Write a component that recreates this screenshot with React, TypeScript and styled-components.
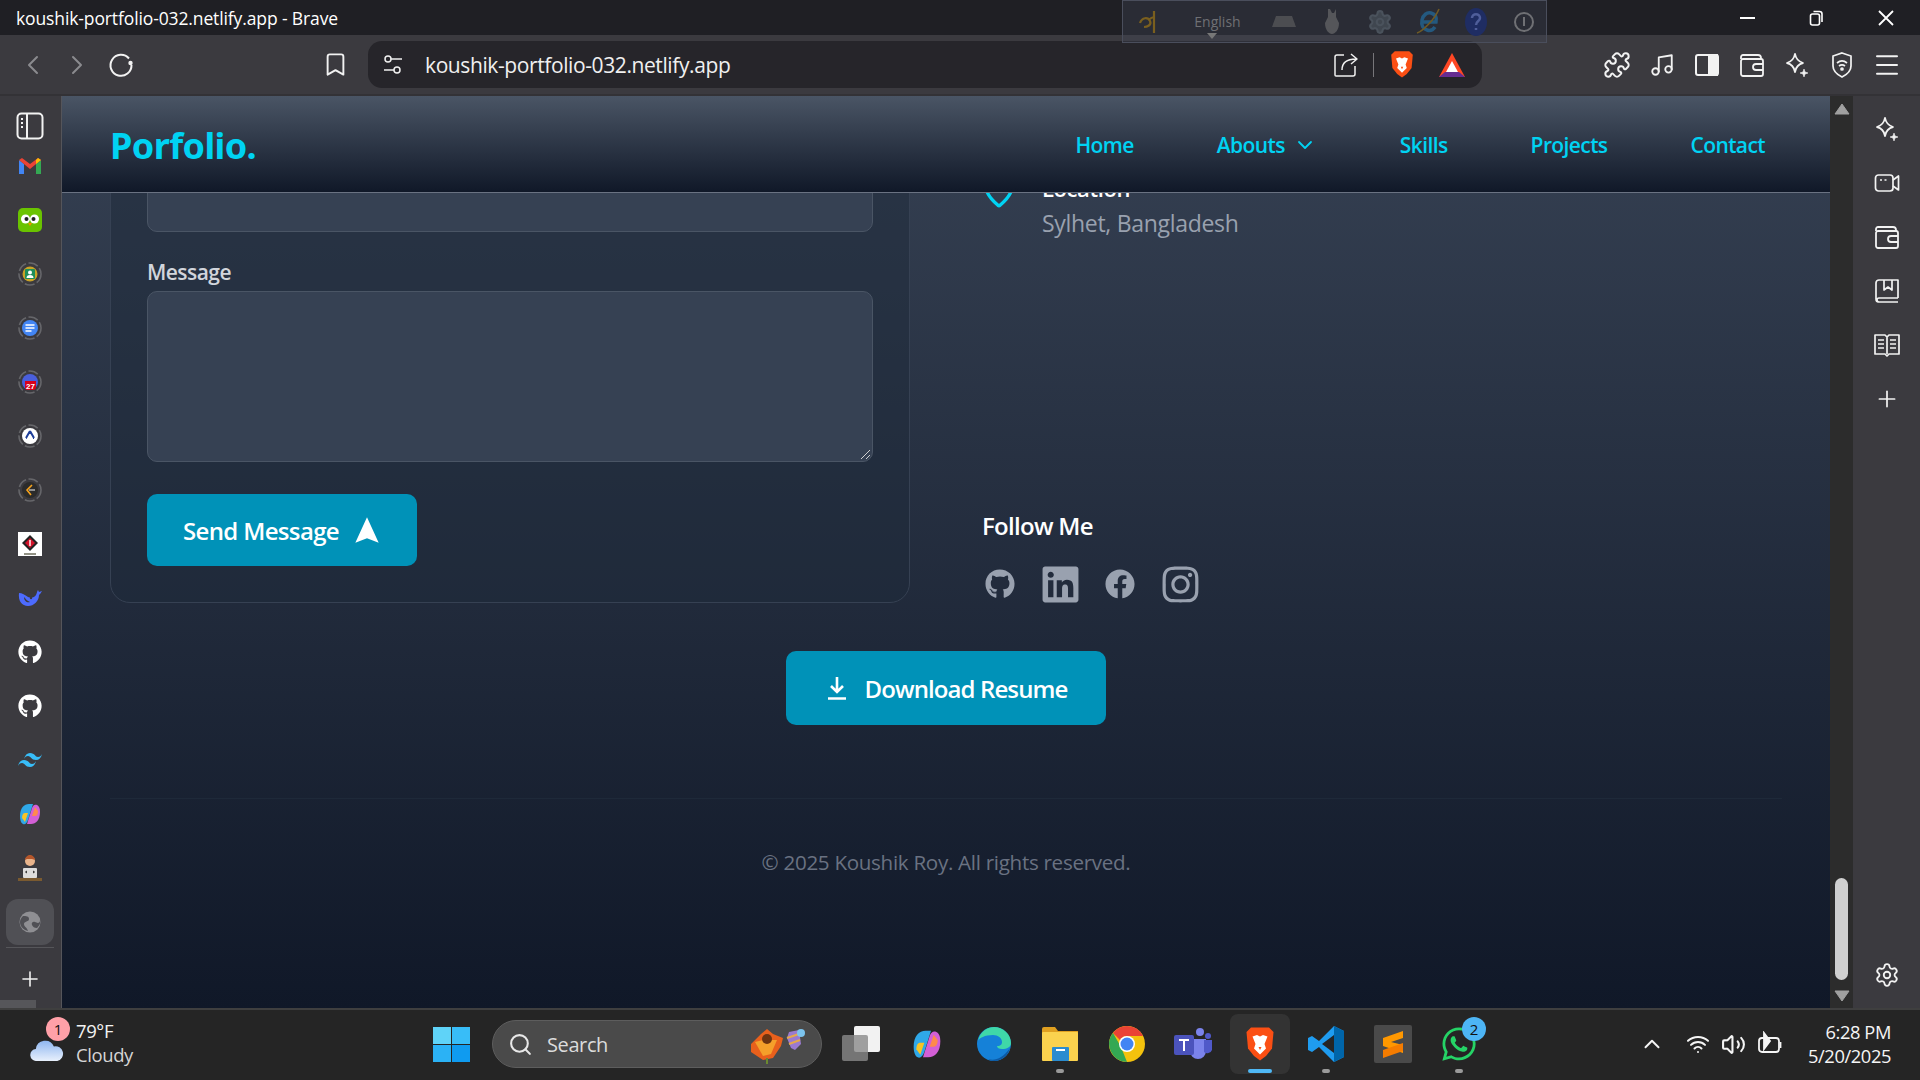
import React from "react";
import styled, { createGlobalStyle } from "styled-components";
import {
  ChevronLeft, ChevronRight, Bookmark, Puzzle, Music, Menu, Plus,
  Settings, ChevronDown, MapPin, Search, ChevronUp, Wifi, Volume2,
} from "lucide-react";
import { FaGithub, FaLinkedin, FaFacebook, FaInstagram, FaWhatsapp } from "react-icons/fa";

const Global = createGlobalStyle`
  html, body { margin: 0; padding: 0; height: 100%; overflow: hidden; background: #252525; }
  * { box-sizing: border-box; }
  body { font-family: "Open Sans", "Noto Sans", "Liberation Sans", sans-serif; }
`;

const Screen = styled.div`
  width: 1920px; height: 1080px; display: flex; flex-direction: column; position: relative; overflow: hidden;
`;
const TitleBar = styled.div`
  height: 35px; background: #1f1f24; display: flex; align-items: center; justify-content: space-between;
  padding-left: 16px; color: #fff; font-size: 17.5px; letter-spacing: -0.12px; flex: none;
`;
const WindowButtons = styled.div`
  display: flex; align-items: center; height: 100%; padding-right: 24px; gap: 49px; color: #fff;
`;
const Toolbar = styled.div`
  height: 61px; background: #3b3a3f; display: flex; align-items: center; flex: none; padding-left: 11px; border-bottom: 2px solid #333236;
`;
const ToolButton = styled.span<{ $w?: number; $dim?: boolean; $gap?: number }>`
  width: ${(p) => p.$w ?? 44}px; margin-left: ${(p) => p.$gap ?? 0}px; display: flex; justify-content: center; align-items: center; flex: none;
  color: ${(p) => (p.$dim ? "#8b8b8f" : "#f2f2f2")};
`;
const UrlBar = styled.div`
  width: 1114px; height: 47px; margin-left: 11px; margin-right: 120px; background: #26252a; border-radius: 14px; display: flex; align-items: center;
  padding: 0 14px 0 15px; color: #f0f0f0; font-size: 21px; letter-spacing: -0.4px; flex: none;
`;
const UrlText = styled.span`
  margin-left: 22px; flex: 1;
`;
const Divider = styled.span`
  width: 1px; height: 24px; background: #77767a; margin: 0 16px 0 12px;
`;
const ToolRow = styled.div`
  display: flex; align-items: center; gap: 15px;
`;
const Main = styled.div`
  flex: 1; display: flex; min-height: 0;
`;
const LeftSide = styled.aside`
  width: 62px; background: #3b3a3f; border-right: 1px solid #55555a; flex: none; display: flex; flex-direction: column; align-items: center; position: relative; padding-right: 1px;
`;
const SideTop = styled.div`
  padding-top: 16px; display: flex; flex-direction: column; align-items: center; gap: 17px; height: 112px;
`;
const SideIcons = styled.div`
  display: flex; flex-direction: column; gap: 30px; align-items: center;
`;
const SideSlot = styled.div`
  height: 24px; width: 24px; display: flex; align-items: center; justify-content: center;
  svg { flex: none; }
`;
const SideItem = styled.div`
  width: 48px; height: 46px; border-radius: 12px; background: #505055; display: flex; align-items: center; justify-content: center; margin-top: 19px;
`;
const SideRule = styled.div`
  width: 48px; height: 1px; background: #56565a; margin-top: 2px; margin-bottom: 19px;
`;
const SideFoot = styled.div`
  position: absolute; left: 0; bottom: 0; width: 36px; height: 8px; background: #56565a;
`;
const Viewport = styled.div`
  flex: 1; min-width: 0; display: flex; flex-direction: column; background: linear-gradient(to bottom, #364153, #101828);
`;
const Nav = styled.nav`
  height: 97px; flex: none; background: linear-gradient(to bottom, #4a5565, #101828); border-bottom: 1px solid #6a7282;
  display: flex; align-items: center; justify-content: space-between; padding: 0 65px 0 48px; position: relative; z-index: 2;
`;
const Logo = styled.div`
  color: #00d3f3; font-size: 36px; font-weight: 700; letter-spacing: -0.6px; font-family: "Noto Sans", sans-serif; padding-top: 2px;
`;
const NavLinks = styled.div`
  display: flex; align-items: center; gap: 83px; color: #00d3f3; font-size: 21px; font-weight: 600; letter-spacing: -0.6px; padding-top: 1px;
`;
const NavLink = styled.a`
  display: flex; align-items: center; gap: 8px;
`;
const PageClip = styled.div`
  flex: 1; min-height: 0; overflow: hidden; display: flex; flex-direction: column; justify-content: flex-end; padding: 0 48px;
`;
const Columns = styled.div`
  display: grid; grid-template-columns: 800px 1fr; gap: 72px; flex: none;
`;
const Card = styled.section`
  background: rgba(30, 41, 57, 0.5); border: 1px solid #364153; border-radius: 20px; padding: 36px; display: flex; flex-direction: column;
`;
const Label = styled.label`
  color: #d1d5dc; font-size: 21px; font-weight: 600; letter-spacing: -0.55px; line-height: 28px; margin-bottom: 5px;
`;
const Field = styled.div`
  height: 62px; background: #364153; border: 1px solid #4a5565; border-radius: 10px; margin-bottom: 26px;
`;
const TextArea = styled.div`
  height: 171px; background: #364153; border: 1px solid #4a5565; border-radius: 10px; margin-bottom: 32px; position: relative;
`;
const Grip = styled.svg`
  position: absolute; right: 1px; bottom: 1px;
`;
const CyanButton = styled.button`
  border: 0; background: #0092b8; color: #fff; border-radius: 10px; font: 600 24px "Open Sans", sans-serif; letter-spacing: -0.65px;
  display: flex; align-items: center; justify-content: center; gap: 14px;
`;
const SendButton = styled(CyanButton)`
  width: 270px; height: 72px;
`;
const InfoColumn = styled.div`
  display: flex; flex-direction: column; justify-content: space-between;
`;
const InfoRow = styled.div`
  display: flex; gap: 26px; align-items: flex-start; margin-top: 40px;
`;
const InfoIcon = styled.span`
  color: #00d3f3; width: 34px; display: flex; justify-content: center; margin-top: -4px;
  svg { flex: none; }
`;
const InfoTitle = styled.div`
  color: #fff; font-size: 22px; font-weight: 600; line-height: 30px; letter-spacing: -0.4px;
`;
const InfoText = styled.div`
  color: #99a1af; font-size: 23px; line-height: 36px; letter-spacing: -0.3px; margin-top: 2px;
`;
const FollowTitle = styled.h3`
  color: #fff; font-size: 24px; font-weight: 600; letter-spacing: -0.7px; margin: 0 0 24px; line-height: 30px;
`;
const Socials = styled.div`
  display: flex; gap: 24px; color: #99a1af; height: 38px; align-items: center;
`;
const SocialSlot = styled.a`
  width: 36px; height: 36px; display: flex; align-items: center; justify-content: center;
  svg { flex: none; }
`;
const Center = styled.div`
  display: flex; justify-content: center; margin-top: 48px; margin-bottom: 73px; flex: none;
`;
const ResumeButton = styled(CyanButton)`
  width: 320px; height: 74px; letter-spacing: -0.9px; gap: 16px;
`;
const Footer = styled.footer`
  flex: none; border-top: 1px solid #1e2939; height: 210px; padding-top: 47px; color: #6a7282; font-size: 20.6px; text-align: center; letter-spacing: -0.3px; line-height: 32px;
`;
const Scrollbar = styled.div`
  width: 23px; background: #2c2c2c; flex: none; display: flex; flex-direction: column; align-items: center; justify-content: space-between; padding: 7px 0 6px;
`;
const ThumbTrack = styled.div`
  flex: 1; display: flex; flex-direction: column; justify-content: flex-end; padding-bottom: 10px;
`;
const Thumb = styled.div`
  width: 13px; height: 102px; background: #d0d0d0; border-radius: 7px;
`;
const RightSide = styled.aside`
  width: 67px; background: #3b3a3f; flex: none; display: flex; flex-direction: column; align-items: center; justify-content: space-between; padding: 20px 0 20px; color: #f2f2f2;
`;
const RightIcons = styled.div`
  display: flex; flex-direction: column; gap: 28px; align-items: center;
`;
const Taskbar = styled.div`
  height: 72px; background: #252525; border-top: 2px solid #3f3f3f; padding-bottom: 2px; flex: none; display: flex; align-items: center; position: relative; color: #fff;
`;
const Weather = styled.div`
  width: 433px; padding-left: 29px; display: flex; align-items: center; gap: 11px; position: relative; flex: none;
`;
const Badge = styled.span<{ $bg: string; $fg?: string }>`
  position: absolute; width: 24px; height: 24px; border-radius: 50%; background: ${(p) => p.$bg}; color: ${(p) => p.$fg ?? "#111"};
  font-size: 15px; display: flex; align-items: center; justify-content: center; line-height: 1;
`;
const WeatherText = styled.div`
  font-size: 18.5px; line-height: 24px; letter-spacing: -0.4px; color: #f3f3f3; margin-bottom: 2px;
`;
const Muted = styled.div`
  color: #d5d5d5;
`;
const SearchBox = styled.div`
  width: 330px; height: 48px; border-radius: 24px; background: #4a4a4a; border: 1px solid #5d5d5d; margin-left: 22px; display: flex; align-items: center; padding-left: 15px; gap: 14px;
  font-size: 20px; color: #dcdcdc; letter-spacing: -0.4px; flex: none; position: relative;
`;
const TaskApps = styled.div`
  display: flex; align-items: center;
`;
const TaskApp = styled.div<{ $active?: boolean }>`
  width: ${(p) => (p.$active ? "60px" : "66.5px")}; margin: 0 ${(p) => (p.$active ? "3.25px" : "0")}; height: 60px; display: flex; align-items: center; justify-content: center; position: relative; flex: none;
  border-radius: 8px; background: ${(p) => (p.$active ? "#333333" : "transparent")};
`;
const RunDot = styled.span<{ $active?: boolean }>`
  position: absolute; bottom: 1px; left: 50%; transform: translateX(-50%); height: 4px; border-radius: 2px;
  width: ${(p) => (p.$active ? "24px" : "8px")}; background: ${(p) => (p.$active ? "#4fb8f5" : "#9a9a9a")};
`;
const Tray = styled.div`
  margin-left: auto; display: flex; align-items: center; gap: 11px; padding-right: 29px; color: #f5f5f5;
`;
const Clock = styled.div`
  text-align: right; font-size: 18.3px; line-height: 24px; letter-spacing: -0.4px; margin-left: 14px;
`;
const LangBar = styled.div`
  position: absolute; left: 1122px; top: 0; width: 425px; height: 43px; background: rgba(70, 76, 92, 0.3); border: 1px solid #4a4e5c;
  display: flex; align-items: center; color: #6f7074; font-size: 14px; padding-left: 12px; z-index: 5;
`;
const LangSlot = styled.span<{ $w: number }>`
  width: ${(p) => p.$w}px; display: flex; justify-content: center; flex: none;
`;
const LangMark = styled.span`
  position: absolute; left: 84px; bottom: 3px; width: 0; height: 0; border-left: 5px solid transparent; border-right: 5px solid transparent; border-top: 6px solid #777;
`;

const Ring = ({ children }: { children: React.ReactNode }) => (
  <svg width="24" height="24" viewBox="0 0 24 24">
    <circle cx="12" cy="12" r="11" fill="none" stroke="#66666a" strokeWidth="1.6" strokeDasharray="10 2.5" />
    {children}
  </svg>
);
const BraveLion = ({ s = 24 }: { s?: number }) => (
  <svg width={s} height={s * 1.2} viewBox="0 0 20 24">
    <path d="M4 1h12l3 3-1 11-4 5-4 3-4-3-4-5L1 4z" fill="#fb4f14" />
    <path d="M5 7l3-1 2 1 2-1 3 1-2 5 1 3-4 4-4-4 1-3z" fill="#fff" />
    <path d="M9 14h2l-1 2z" fill="#fb4f14" />
  </svg>
);
const Sparkle = ({ s = 26 }: { s?: number }) => (
  <svg width={s} height={s} viewBox="0 0 26 26" fill="none" stroke="currentColor" strokeWidth="1.8" strokeLinejoin="round">
    <path d="M11 2c1 5 3 7 8 9-5 1-7 4-8 9-1-5-3-8-8-9 5-2 7-4 8-9z" />
    <path d="M20 17l1 3 3 1-3 1-1 3-1-3-3-1 3-1z" fill="currentColor" strokeWidth="0.6" />
  </svg>
);
const WalletIcon = () => (
  <svg width="26" height="26" viewBox="0 0 26 26" fill="none" stroke="currentColor" strokeWidth="1.8" strokeLinejoin="round">
    <path d="M2 7V5a2 2 0 0 1 2-2h15a3 3 0 0 1 3 3v1" />
    <rect x="2" y="7" width="22" height="17" rx="2" />
    <path d="M24 12h-7a3 3 0 0 0 0 6h7" />
  </svg>
);
const Copilot = ({ w, h }: { w: number; h: number }) => (
  <svg width={w} height={h} viewBox="0 0 24 24">
    <path d="M2 14C2 6 6 2 11 2h4l-5 16c-1 3-3 5-5 4s-3-4-3-8z" fill="#2fa8e8" />
    <path d="M4 16c0-3 1-5 3-5h3l-3 9z" fill="#f7c325" />
    <path d="M22 10c0 8-4 12-9 12H9l5-16c1-3 3-4 5-3s3 3 3 7z" fill="#d35fd6" />
    <path d="M20 9c0 3-1 5-3 5h-3l3-9z" fill="#ff8a4c" />
  </svg>
);

export default function App() {
  return (
    <Screen>
      <Global />
      <TitleBar>
        koushik-portfolio-032.netlify.app - Brave
        <WindowButtons>
          <svg width="20" height="20" viewBox="0 0 20 20"><path d="M2 10h15" stroke="#fff" strokeWidth="2" /></svg>
          <svg width="20" height="20" viewBox="0 0 20 20" fill="none" stroke="#fff" strokeWidth="1.6"><rect x="3.500" y="6" width="9" height="11" rx="2" /><path d="M6.500 3.500h6a2.500 2.500 0 0 1 2.500 2.500v8" /></svg>
          <svg width="20" height="20" viewBox="0 0 20 20" stroke="#fff" strokeWidth="1.8"><path d="M3 3l14 14M17 3L3 17" /></svg>
        </WindowButtons>
      </TitleBar>
      <Toolbar>
        <ToolButton $dim><ChevronLeft size={32} strokeWidth={1.5} /></ToolButton>
        <ToolButton $dim><ChevronRight size={32} strokeWidth={1.5} /></ToolButton>
        <ToolButton>
          <svg width="26" height="26" viewBox="0 0 26 26" fill="none" stroke="currentColor" strokeWidth="2">
            <path d="M21 6.500A10.500 10.500 0 1 0 23.500 13" /><circle cx="22.500" cy="11" r="2.200" fill="currentColor" stroke="none" />
          </svg>
        </ToolButton>
        <ToolButton $gap={170}><Bookmark size={27} strokeWidth={1.7} /></ToolButton>
        <UrlBar>
          <svg width="20" height="22" viewBox="0 0 20 22" fill="none" stroke="currentColor" strokeWidth="1.500"><circle cx="5" cy="5" r="3" /><path d="M8 5h11" /><circle cx="14" cy="16" r="3" /><path d="M1 16h10" /></svg>
          <UrlText>koushik-portfolio-032.netlify.app</UrlText>
          <svg width="26" height="26" viewBox="0 0 26 26" fill="none" stroke="currentColor" strokeWidth="1.500" strokeLinejoin="round" style={{ marginRight: 2 }}>
            <path d="M11 3H4a2 2 0 0 0-2 2v18a1 1 0 0 0 1 1h17a2 2 0 0 0 2-2v-8" /><path d="M9 18c0-7 4-11 14-11M18 2l6 5-6 5" />
          </svg>
          <Divider />
          <BraveLion />
          <svg width="28" height="26" viewBox="0 0 28 26" style={{ marginLeft: 24, marginRight: 2 }}>
            <path d="M14 1l13 24H1z" fill="#ff4724" /><path d="M1 25l6-5h14l6 5z" fill="#662d91" /><path d="M14 9l6 11H8z" fill="#fff" />
          </svg>
        </UrlBar>
        <ToolRow>
          <ToolButton $w={30}><Puzzle size={28} strokeWidth={1.7} /></ToolButton>
          <ToolButton $w={30}><Music size={26} strokeWidth={1.7} /></ToolButton>
          <ToolButton $w={30}>
            <svg width="26" height="26" viewBox="0 0 26 26" fill="none" stroke="currentColor" strokeWidth="2"><rect x="2" y="3" width="22" height="20" rx="2" /><path d="M15 3h8v20h-8z" fill="currentColor" /></svg>
          </ToolButton>
          <ToolButton $w={30}><WalletIcon /></ToolButton>
          <ToolButton $w={30}><Sparkle /></ToolButton>
          <ToolButton $w={30}>
            <svg width="26" height="28" viewBox="0 0 26 28" fill="none" stroke="currentColor" strokeWidth="1.700"><path d="M13 2l9 3v10c0 6-5 9-9 11-4-2-9-5-9-11V5z" /><path d="M8 12c3-2.500 7-2.500 10 0M10 15c2-1.500 4-1.500 6 0" /><circle cx="13" cy="18" r="1" fill="currentColor" /></svg>
          </ToolButton>
          <ToolButton $w={30}><Menu size={32} strokeWidth={1.6} /></ToolButton>
        </ToolRow>
      </Toolbar>
      <LangBar>
        <LangSlot $w={30}>
          <svg width="24" height="26" viewBox="0 0 24 26" fill="none" stroke="#7a5f1e" strokeWidth="2.200"><path d="M2 14c2-6 8-6 10-2s-3 6-6 6M16 2v22M12 10c2-2 4-2 4 0" /></svg>
        </LangSlot>
        <LangSlot $w={105}>English</LangSlot>
        <LangSlot $w={28}>
          <svg width="26" height="14" viewBox="0 0 26 14"><path d="M5 1h16l4 11H1z" fill="#4c4d51" /></svg>
        </LangSlot>
        <LangSlot $w={68}>
          <svg width="22" height="28" viewBox="0 0 22 28"><path d="M7 1v8l-3 6c0 7 4 11 7 11s7-4 7-11l-3-6V1l-2 4h-2l-2-4z" fill="#55565a" /></svg>
        </LangSlot>
        <LangSlot $w={28}>
          <Settings size={26} color="#4a525c" fill="#3f464f" />
        </LangSlot>
        <LangSlot $w={68}>
          <svg width="26" height="30" viewBox="0 0 26 30" fill="none"><path d="M20 20c-2 3-5 4-8 3-4-1-6-5-5-10s5-8 9-7 6 4 5 9H7" stroke="#24597f" strokeWidth="3.500" /><path d="M2 26C8 24 20 12 24 2" stroke="#6f5a24" strokeWidth="1.600" /></svg>
        </LangSlot>
        <LangSlot $w={28}>
          <svg width="24" height="30" viewBox="0 0 24 30"><ellipse cx="12" cy="15" rx="11" ry="14" fill="#1f2d63" /><path d="M8 11c0-5 8-5 8 0 0 3-4 3-4 7M12 21v2" stroke="#4f5e9a" strokeWidth="2.500" fill="none" /></svg>
        </LangSlot>
        <LangSlot $w={68}>
          <svg width="22" height="22" viewBox="0 0 22 22" fill="none" stroke="#6f7074" strokeWidth="2"><circle cx="11" cy="11" r="9" /><path d="M11 6v9" /></svg>
        </LangSlot>
        <LangMark />
      </LangBar>
      <Main>
        <LeftSide>
          <SideTop>
            <svg width="28" height="28" viewBox="0 0 28 28" fill="none" stroke="#f2f2f2" strokeWidth="2"><rect x="1.500" y="1.500" width="25" height="25" rx="4" /><path d="M11 2v24M5 7h2M5 11h2M5 15h2" /></svg>
            <svg width="22" height="17" viewBox="0 0 22 17">
              <path d="M0 3v14h5V7z" fill="#4285f4" /><path d="M22 3v14h-5V7z" fill="#34a853" /><path d="M0 3l11 9 11-9-3-2-8 6-8-6z" fill="#ea4335" /><path d="M22 3l-3-2-2 2v4z" fill="#fbbc04" />
            </svg>
          </SideTop>
          <SideIcons>
            <SideSlot>
              <svg width="24" height="24" viewBox="0 0 24 24">
                <rect width="24" height="24" rx="5" fill="#6ac300" /><circle cx="7.500" cy="11" r="4.500" fill="#fff" /><circle cx="16.500" cy="11" r="4.500" fill="#fff" /><circle cx="8.500" cy="11" r="2" fill="#222" /><circle cx="15.500" cy="11" r="2" fill="#222" /><path d="M10 15h4l-2 3z" fill="#f49000" />
              </svg>
            </SideSlot>
            <SideSlot><Ring><circle cx="12" cy="12" r="7.500" fill="#c9a227" /><rect x="7" y="7" width="10" height="10" rx="1" fill="#1e8e5a" /><circle cx="12" cy="10.500" r="2" fill="#fff" /><path d="M8.500 16a3.500 3 0 0 1 7 0z" fill="#fff" /></Ring></SideSlot>
            <SideSlot><Ring><circle cx="12" cy="12" r="8" fill="#4285f4" /><path d="M7.500 9h9M7.500 12h9M7.500 15h6" stroke="#fff" strokeWidth="1.500" /></Ring></SideSlot>
            <SideSlot><Ring><circle cx="12" cy="12" r="8" fill="#4a5fdc" /><path d="M7 11h11v6a3 3 0 0 1-3 3H9a3 3 0 0 1-2-2z" fill="#d9001b" /><text x="12.500" y="18.500" textAnchor="middle" fontSize="8" fontWeight="700" fill="#fff" fontFamily="Liberation Sans">27</text></Ring></SideSlot>
            <SideSlot><Ring><circle cx="12" cy="12" r="8" fill="#fff" /><path d="M12 7l4 7M12 7l-4 7M8 14h1M15 14h1" stroke="#1f3f9a" strokeWidth="2" /></Ring></SideSlot>
            <SideSlot><Ring><circle cx="12" cy="12" r="8" fill="#2b2b2b" /><path d="M14 7l-5 5 4 5" fill="none" stroke="#f7a21b" strokeWidth="1.600" /><path d="M11 12h6" stroke="#bbb" strokeWidth="1.400" /></Ring></SideSlot>
            <SideSlot>
              <svg width="24" height="24" viewBox="0 0 24 24">
                <rect width="24" height="24" fill="#fff" /><path d="M12 3l8 8-8 8-8-8z" fill="#222" /><path d="M12 6l5 5-5 5-5-5z" fill="#d3122a" /><path d="M12 8v6" stroke="#fff" strokeWidth="1.400" /><path d="M6 22h12" stroke="#776" strokeWidth="1.600" />
              </svg>
            </SideSlot>
            <SideSlot>
              <svg width="24" height="18" viewBox="0 0 24 18">
                <path d="M1 4c3 0 6 2 9 4 3 1 6 1 8-2 1-2 1-4 2-5l1 2 3-1c-1 2-2 3-3 4 0 6-5 11-11 11S0 12 1 4z" fill="#4d6bfe" /><path d="M6 8c0 4 3 6 6 5-3-1-4-3-6-5z" fill="#3b3a3f" /><circle cx="13" cy="9" r="1.200" fill="#3b3a3f" />
              </svg>
            </SideSlot>
            <SideSlot><FaGithub size={24} color="#fff" /></SideSlot>
            <SideSlot><FaGithub size={24} color="#fff" /></SideSlot>
            <SideSlot>
              <svg width="24" height="15" viewBox="0 0 24 15" fill="#38bdf8"><path d="M6 6c1-4 3-6 6-6 5 0 5 4 8 4 2 0 3-1 4-3-1 4-3 6-6 6-5 0-5-4-8-4-2 0-3 1-4 3zM0 13c1-4 3-6 6-6 5 0 5 4 8 4 2 0 3-1 4-3-1 4-3 6-6 6-5 0-5-4-8-4-2 0-3 1-4 3z" /></svg>
            </SideSlot>
            <SideSlot><Copilot w={24} h={24} /></SideSlot>
            <SideSlot>
              <svg width="24" height="26" viewBox="0 0 24 26">
                <circle cx="12" cy="6" r="5" fill="#e9b48c" /><path d="M7 5c0-3 3-5 5-5s5 2 5 5l-3-1H9z" fill="#b5562b" /><rect x="5" y="13" width="14" height="10" rx="1" fill="#ddd" /><path d="M9 18l-1.500-1 1.500-1M15 18l1.500-1-1.500-1" stroke="#222" fill="none" /><rect y="23" width="24" height="3" fill="#7a5a30" />
              </svg>
            </SideSlot>
          </SideIcons>
          <SideItem>
            <svg width="22" height="22" viewBox="0 0 22 22">
              <circle cx="11" cy="11" r="10.500" fill="#8f8f93" /><path d="M4 5c3 0 6 0 6 3s-5 2-5 5 3 3 4 7c-4-1-8-4-8-9 0-2 1-4 3-6zM21 9c0 4-3 3-5 2s-4 1-3 3 2 3 5 3c2-2 4-5 3-8z" fill="#505055" />
            </svg>
          </SideItem>
          <SideRule />
          <Plus size={24} color="#f2f2f2" strokeWidth={1.6} />
          <SideFoot />
        </LeftSide>
        <Viewport>
          <Nav>
            <Logo>Porfolio.</Logo>
            <NavLinks>
              <NavLink>Home</NavLink>
              <NavLink>Abouts <ChevronDown size={24} strokeWidth={1.8} /></NavLink>
              <NavLink>Skills</NavLink>
              <NavLink>Projects</NavLink>
              <NavLink>Contact</NavLink>
            </NavLinks>
          </Nav>
          <PageClip>
            <Columns>
              <Card>
                <Field />
                <Label>Message</Label>
                <TextArea>
                  <Grip width="12" height="12" viewBox="0 0 12 12" stroke="#d0d0d0" strokeWidth="1"><path d="M11 2L2 11M11 7l-4 4" /></Grip>
                </TextArea>
                <SendButton>
                  Send Message
                  <svg width="28" height="28" viewBox="0 0 24 24" fill="#fff"><path d="M12 1l10 22-10-4-10 4z" /></svg>
                </SendButton>
              </Card>
              <InfoColumn>
                <InfoRow>
                  <InfoIcon><MapPin size={40} strokeWidth={2} /></InfoIcon>
                  <div>
                    <InfoTitle>Location</InfoTitle>
                    <InfoText>Sylhet, Bangladesh</InfoText>
                  </div>
                </InfoRow>
                <div>
                  <FollowTitle>Follow Me</FollowTitle>
                  <Socials>
                    <SocialSlot><FaGithub size={30} /></SocialSlot>
                    <SocialSlot><FaLinkedin size={41} /></SocialSlot>
                    <SocialSlot><FaFacebook size={30} /></SocialSlot>
                    <SocialSlot><FaInstagram size={41} /></SocialSlot>
                  </Socials>
                </div>
              </InfoColumn>
            </Columns>
            <Center>
              <ResumeButton>
                <svg width="24" height="26" viewBox="0 0 24 26" fill="none" stroke="#fff" strokeWidth="2.600"><path d="M12 2v15M6 11l6 6 6-6M3 23.500h18" /></svg>
                Download Resume
              </ResumeButton>
            </Center>
            <Footer>© 2025 Koushik Roy. All rights reserved.</Footer>
          </PageClip>
        </Viewport>
        <Scrollbar>
          <svg width="16" height="12" viewBox="0 0 16 12"><path d="M8 1l7 10H1z" fill="#a0a0a0" stroke="#a0a0a0" strokeLinejoin="round" /></svg>
          <ThumbTrack><Thumb /></ThumbTrack>
          <svg width="16" height="12" viewBox="0 0 16 12"><path d="M8 11l7-10H1z" fill="#a0a0a0" stroke="#a0a0a0" strokeLinejoin="round" /></svg>
        </Scrollbar>
        <RightSide>
          <RightIcons>
            <Sparkle />
            <svg width="26" height="26" viewBox="0 0 26 26" fill="none" stroke="currentColor" strokeWidth="1.700" strokeLinejoin="round">
              <rect x="1.500" y="5" width="17.500" height="16" rx="3" /><path d="M19 10l5.500-4v14L19 16M6 10h2M10.500 10h2" />
            </svg>
            <WalletIcon />
            <svg width="26" height="26" viewBox="0 0 26 26" fill="none" stroke="currentColor" strokeWidth="1.700" strokeLinejoin="round">
              <path d="M24 20V2H5a3 3 0 0 0-3 3v16a3 3 0 0 0 3 3h19M24 20H5a2 2 0 0 0 0 4M10 2v10l4-3 4 3V2" />
            </svg>
            <svg width="26" height="26" viewBox="0 0 26 26" fill="none" stroke="currentColor" strokeWidth="1.700" strokeLinejoin="round">
              <path d="M1 3h10l2 2 2-2h10v19H15l-2 2-2-2H1zM13 5v17M4 8h6M4 12h6M4 16h6M16 8h6M16 12h6M16 16h6" />
            </svg>
            <Plus size={26} strokeWidth={1.6} />
          </RightIcons>
          <Settings size={26} strokeWidth={1.7} />
        </RightSide>
      </Main>
      <Taskbar>
        <Weather>
          <svg width="36" height="24" viewBox="0 0 40 28" style={{ marginTop: 10 }}>
            <defs><linearGradient id="cl" x1="0" y1="0" x2="0" y2="1"><stop offset="0" stopColor="#8fb6f0" /><stop offset="1" stopColor="#e8f0fc" /></linearGradient></defs>
            <path d="M8 28a7 7 0 0 1-1-14 11 11 0 0 1 21-3 8 8 0 0 1 4 17z" fill="url(#cl)" />
          </svg>
          <Badge $bg="#ffa0a8" style={{ left: 46, top: -2 }}>1</Badge>
          <WeatherText>79°F<Muted>Cloudy</Muted></WeatherText>
        </Weather>
        <svg width="37" height="35" viewBox="0 0 37 35">
          <rect width="18" height="17" fill="#5fd3f8" /><rect x="19" width="18" height="17" fill="#38bdf8" /><rect y="18" width="18" height="17" fill="#2bb2f5" /><rect x="19" y="18" width="18" height="17" fill="#0f9bf0" />
        </svg>
        <SearchBox>
          <Search size={25} color="#e8e8e8" strokeWidth={2} />
          Search
          <svg width="58" height="38" viewBox="0 0 58 38" style={{ position: "absolute", right: 14, top: 5 }}>
            <path d="M2 18L12 8l6-5 6 5 10 4-2 8-8 12-10 2-12-8z" fill="#e8601c" /><path d="M6 16l8-2 14 0-6 14-8 2z" fill="#f5a02a" /><circle cx="18" cy="13" r="5" fill="#6d3410" /><path d="M18 32v6" stroke="#6c8a30" strokeWidth="2" /><path d="M40 6l10-2 2 14-6 6-4-2-4-10z" fill="#9a7ad0" /><path d="M38 12l12-4M40 18l11-4" stroke="#e5a94a" strokeWidth="2" /><circle cx="52" cy="7" r="4" fill="#7cc4ee" />
          </svg>
        </SearchBox>
        <TaskApps>
          <svg width="38" height="36" viewBox="0 0 38 36" style={{ marginLeft: 20, marginRight: 14 }}>
            <rect x="12" y="0" width="26" height="26" rx="2" fill="#f2f2f2" /><rect y="9" width="26" height="26" rx="2" fill="#8a8a8a" fillOpacity=".8" />
          </svg>
          <TaskApp><Copilot w={32} h={34} /></TaskApp>
          <TaskApp>
            <svg width="36" height="36" viewBox="0 0 36 36"><circle cx="18" cy="18" r="17" fill="#1581d8" /><path d="M2 15C4 5 12 1 18 1c9 0 17 7 17 16 0 4-4 6-9 6-3 0-5-1-5-3 4 0 5-2 5-4 0-4-4-7-9-7C9 9 3 12 2 15z" fill="#3fd8a8" /><path d="M34 22c-2 8-9 13-16 13-3 0-4-1-6-2 7 2 14 0 22-11z" fill="#0c59a4" /></svg>
          </TaskApp>
          <TaskApp>
            <svg width="36" height="34" viewBox="0 0 36 34"><path d="M0 2a2 2 0 0 1 2-2h11l3 4h20v4H0z" fill="#e0a020" /><rect y="5" width="36" height="29" rx="1" fill="#fbd24e" /><rect x="10" y="20" width="17" height="14" rx="1" fill="#2a8cd0" /><rect x="14" y="22" width="9" height="2" fill="#fff" /></svg>
            <RunDot />
          </TaskApp>
          <TaskApp>
            <svg width="36" height="36" viewBox="0 0 36 36"><circle cx="18" cy="18" r="18" fill="#f4c20d" /><path d="M18 0a18 18 0 0 1 16 10H18a8 8 0 0 0-7 4L4 7A18 18 0 0 1 18 0z" fill="#ea4335" /><path d="M4 7l8 14 6 15A18 18 0 0 1 4 7z" fill="#34a853" /><circle cx="18" cy="18" r="8" fill="#fff" /><circle cx="18" cy="18" r="6.500" fill="#4285f4" /></svg>
          </TaskApp>
          <TaskApp>
            <svg width="38" height="36" viewBox="0 0 38 36"><circle cx="26" cy="6" r="4" fill="#7b83eb" /><circle cx="34" cy="10" r="3" fill="#5059c9" /><path d="M14 13h18v12a8 8 0 0 1-16 0z" fill="#7b83eb" /><path d="M30 14h8v10a5 5 0 0 1-8 2z" fill="#5059c9" /><rect y="9" width="20" height="20" rx="2" fill="#4b53bc" /><path d="M5 13h10v2h-4v10H9V15H5z" fill="#fff" /></svg>
          </TaskApp>
          <TaskApp $active>
            <BraveLion s={30} />
            <RunDot $active />
          </TaskApp>
          <TaskApp>
            <svg width="36" height="36" viewBox="0 0 36 36"><path d="M26 0l10 5v26l-10 5-15-15-7 5-4-2V12l4-2 7 5z" fill="#1f9cf0" /><path d="M26 9L14 18l12 9z" fill="#252525" /><path d="M26 0l10 5v26l-10 5z" fill="#0065a9" /></svg>
            <RunDot />
          </TaskApp>
          <TaskApp>
            <svg width="38" height="38" viewBox="0 0 38 38"><rect width="38" height="38" rx="2" fill="#4a4a4a" /><path d="M29 6L9 13v8l20 7v-8L17 17l12-4z" fill="#ff9800" /><path d="M9 25l20-7v8L9 33z" fill="#f57c00" /></svg>
          </TaskApp>
          <TaskApp>
            <FaWhatsapp size={38} color="#25d366" />
            <Badge $bg="#4db5f5" style={{ left: 36, top: 3 }}>2</Badge>
            <RunDot />
          </TaskApp>
        </TaskApps>
        <Tray>
          <ChevronUp size={26} strokeWidth={1.8} />
          <Wifi size={24} style={{ marginLeft: 10 }} />
          <Volume2 size={25} />
          <svg width="26" height="26" viewBox="0 0 26 26" fill="none" stroke="#f5f5f5" strokeWidth="1.800"><rect x="2" y="7" width="20" height="14" rx="3" /><path d="M23.500 11v6" /><path d="M7 2v16l6-8z" fill="#f5f5f5" /></svg>
          <Clock>6:28 PM<div>5/20/2025</div></Clock>
        </Tray>
      </Taskbar>
    </Screen>
  );
}
